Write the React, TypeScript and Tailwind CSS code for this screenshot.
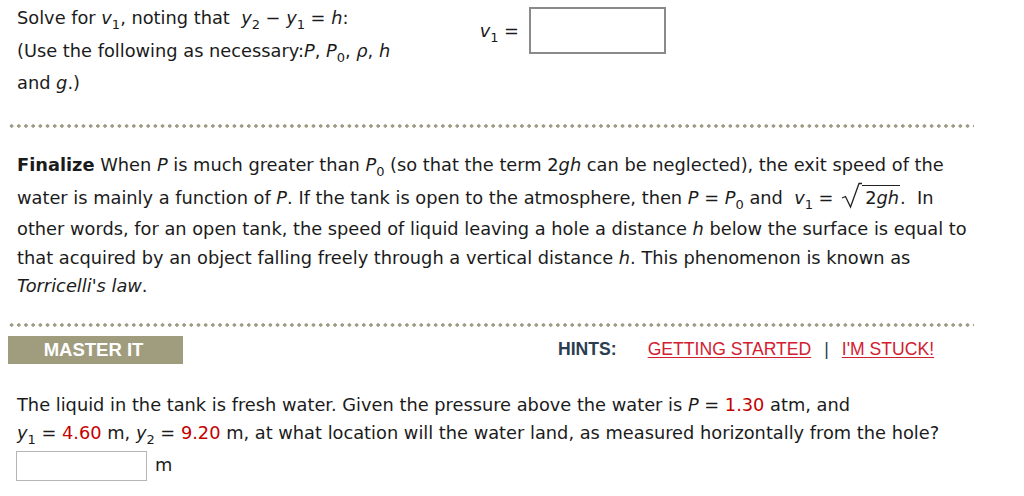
const font = { fontFamily: '"DejaVu Sans", Verdana, sans-serif' };
const arial = { fontFamily: '"Liberation Sans", Arial, sans-serif' };

function Sub({ children }: { children: React.ReactNode }) {
  return <sub className="text-[13px] align-baseline" style={{ verticalAlign: '-2px' }}>{children}</sub>;
}

function Sqrt({ children }: { children: React.ReactNode }) {
  return (
    <span className="inline-flex items-end align-[-5px] ml-[2px]">
      <svg width="21" height="27" viewBox="0 0 21 27" className="shrink-0">
        <path d="M1 16 L4.5 14.5 L9.5 25 L18 1.5 L21 1.5" fill="none" stroke="#222" strokeWidth="1.3" />
      </svg>
      <span className="border-t-[1.3px] border-[#222] pl-[3px] pr-[1px] leading-[23px]">{children}</span>
    </span>
  );
}

function Dots() {
  return (
    <div className="ml-[8px] w-[966px] h-[4px] bg-[radial-gradient(circle,#9e9c84_1.5px,transparent_1.9px)] bg-[length:7.2px_4px]" />
  );
}

export default function App() {
  return (
    <div className="w-[1024px] h-[496px] bg-white text-[#1b1b1b] text-[17.8px] overflow-hidden" style={font}>
      <div className="flex pt-[2px]">
        <div className="w-[420px] pl-[17px] leading-[32.5px]">
          <div>
            Solve for <i>v</i><Sub>1</Sub>, noting that&nbsp; <i>y</i><Sub>2</Sub> − <i>y</i><Sub>1</Sub> = <i>h</i>:
          </div>
          <div>
            (Use the following as necessary:<i>P</i>, <i>P</i><Sub>0</Sub>, <i>ρ</i>, <i>h</i>
          </div>
          <div>and <i>g</i>.)</div>
        </div>
        <div className="flex items-center mt-[5px] h-[47px]">
          <span className="w-[109px] text-right pr-[10px] mt-[2px]">
            <i>v</i><Sub>1</Sub> =
          </span>
          <div className="w-[137px] h-[47px] border-2 border-[#8a8a8a] bg-white" />
        </div>
      </div>

      <div className="mt-[24px]">
        <Dots />
      </div>

      <div className="pl-[17px] mt-[21px]">
        <div className="h-[32px] leading-[32px]">
          <b>Finalize</b> When <i>P</i> is much greater than <i>P</i><Sub>0</Sub> (so that the term 2<i>gh</i> can be neglected), the exit speed of the
        </div>
        <div className="h-[33px] leading-[33px]">
          water is mainly a function of <i>P</i>. If the tank is open to the atmosphere, then <i>P</i> = <i>P</i><Sub>0</Sub> and&nbsp; <i>v</i><Sub>1</Sub> = <Sqrt>2<i>gh</i></Sqrt>.&nbsp; In
        </div>
        <div className="h-[30px] leading-[30px]">
          other words, for an open tank, the speed of liquid leaving a hole a distance <i>h</i> below the surface is equal to
        </div>
        <div className="h-[28px] leading-[28px]">
          that acquired by an object falling freely through a vertical distance <i>h</i>. This phenomenon is known as
        </div>
        <div className="h-[28px] leading-[28px]">
          <i>Torricelli's law</i>.
        </div>
      </div>

      <div className="mt-[23px]">
        <Dots />
      </div>

      <div className="flex items-center mt-[9px] h-[28px]">
        <div
          className="ml-[8px] w-[175px] h-[28px] bg-[#a09c7e] text-white font-bold text-[18.5px] flex items-center justify-center pr-[4px]"
          style={arial}
        >
          MASTER IT
        </div>
        <div className="flex items-center ml-[375px] text-[17.6px]" style={arial}>
          <span className="font-bold text-[#2b3e4f]">HINTS:</span>
          <a className="ml-[31px] text-[#d1202f] underline underline-offset-2">GETTING STARTED</a>
          <span className="mx-[13px] text-[#2b3e4f]">|</span>
          <a className="text-[#d1202f] underline underline-offset-2">I'M STUCK!</a>
        </div>
      </div>

      <div className="pl-[17px] mt-[27px] leading-[28px]">
        <div>
          The liquid in the tank is fresh water. Given the pressure above the water is <i>P</i> = <span className="text-[#c40000]">1.30</span> atm, and
        </div>
        <div>
          <i>y</i><Sub>1</Sub> = <span className="text-[#c40000]">4.60</span> m, <i>y</i><Sub>2</Sub> = <span className="text-[#c40000]">9.20</span> m, at what location will the water land, as measured horizontally from the hole?
        </div>
      </div>
      <div className="flex items-center pl-[16px] mt-[4px]">
        <div className="w-[131px] h-[30px] border border-[#b5b5b5] bg-white" />
        <span className="ml-[8px]">m</span>
      </div>
    </div>
  );
}
